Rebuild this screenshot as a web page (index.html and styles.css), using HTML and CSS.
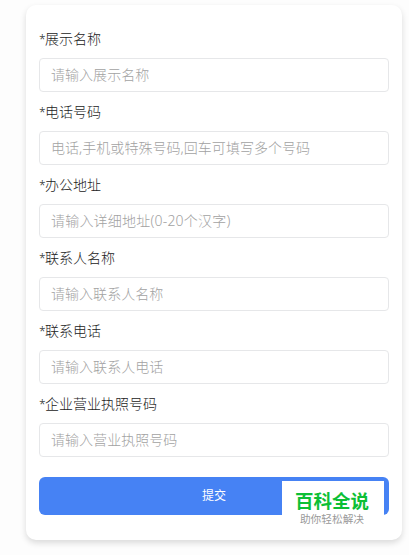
FILE: index.html
```html
<!DOCTYPE html>
<html lang="zh-CN">
<head>
  <meta charset="UTF-8" />
  <meta name="viewport" content="width=device-width, initial-scale=1.0" />
  <title>展示名称</title>
  <link rel="stylesheet" href="styles.css">
</head>
<body>
  <form class="card">
    <div class="field">
      <label class="field-label" for="showName"><span class="star">*</span>展示名称</label>
      <input class="field-input" type="text" id="showName" placeholder="请输入展示名称" />
    </div>
    <div class="field">
      <label class="field-label" for="phones"><span class="star">*</span>电话号码</label>
      <input class="field-input" type="text" id="phones" placeholder="电话,手机或特殊号码,回车可填写多个号码" />
    </div>
    <div class="field">
      <label class="field-label" for="address"><span class="star">*</span>办公地址</label>
      <input class="field-input address-input" type="text" id="address" placeholder="请输入详细地址(0-20个汉字)" />
    </div>
    <div class="field">
      <label class="field-label" for="contact"><span class="star">*</span>联系人名称</label>
      <input class="field-input" type="text" id="contact" placeholder="请输入联系人名称" />
    </div>
    <div class="field">
      <label class="field-label" for="contactPhone"><span class="star">*</span>联系电话</label>
      <input class="field-input" type="text" id="contactPhone" placeholder="请输入联系人电话" />
    </div>
    <div class="field">
      <label class="field-label" for="license"><span class="star">*</span>企业营业执照号码</label>
      <input class="field-input" type="text" id="license" placeholder="请输入营业执照号码" />
    </div>
    <button class="submit-btn" type="button">提交</button>

    <div class="badge">
      <div class="badge-title">百科全说</div>
      <div class="badge-text">助你轻松解决</div>
    </div>
  </form>
</body>
</html>
```
FILE: styles.css
```css
* {
  box-sizing: border-box;
}
body {
  margin: 0;
  min-height: 555px;
  padding: 5px 7px 15px 26px;
  background-color: #fdfdfd;
  font-family: "Noto Sans", "Noto Sans CJK SC", sans-serif;
}
.card {
  position: relative;
  width: 376px;
  height: 535px;
  padding: 20px 13px 0;
  background: #fff;
  border-radius: 10px;
  box-shadow: 0 3px 6px rgba(0, 0, 0, 0.14);
}
.field {
  height: 73px;
}
.field-label {
  display: block;
  height: 33px;
  line-height: 28px;
  font-size: 14px;
  font-weight: 300;
  color: #222;
}
.star {
  display: inline-block;
  width: 6px;
  font-size: 12px;
}
.field-input {
  display: block;
  width: 100%;
  height: 34px;
  padding: 0 11px 2px;
  border: 1px solid #e6e7e9;
  border-radius: 4px;
  background: #fff;
  font-family: inherit;
  font-size: 14px;
  font-weight: 300;
  letter-spacing: 0.04px;
  color: #222;
}
.address-input {
  letter-spacing: 0.2px;
}
.field-input::placeholder {
  color: #a2a2a2;
}
.submit-btn {
  display: block;
  width: 100%;
  height: 38px;
  margin-top: 14px;
  padding: 0 0 2px;
  border: none;
  border-radius: 6px;
  background-color: #4682f4;
  color: #fff;
  font-family: inherit;
  font-size: 12px;
  cursor: pointer;
}
.badge {
  position: absolute;
  right: 18px;
  bottom: 6px;
  width: 102px;
  height: 53px;
  padding: 8px 2px 0 0;
  background: #fff;
  text-align: center;
  white-space: nowrap;
}
.badge-title {
  height: 22px;
  line-height: 24px;
  font-size: 18.5px;
  font-weight: 700;
  color: #0cbf35;
}
.badge-text {
  line-height: 16px;
  font-size: 10.7px;
  color: #999;
}
```
